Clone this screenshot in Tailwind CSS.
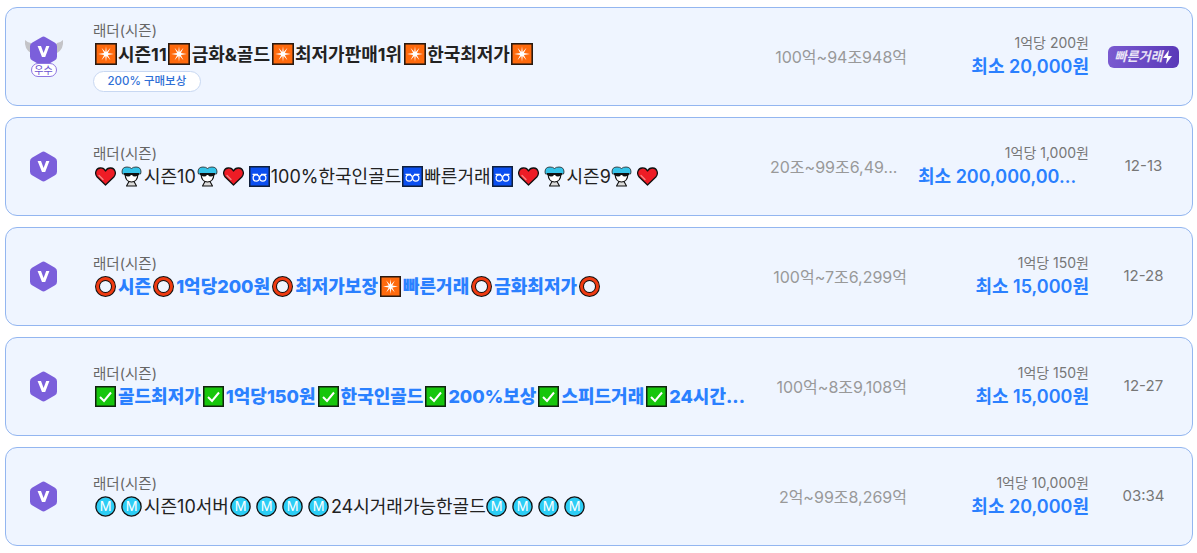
<!DOCTYPE html>
<html lang="ko">
<head>
  <meta charset="UTF-8">
  <title>래더 시즌 골드 판매 목록</title>
  <script src="https://cdn.jsdelivr.net/npm/@tailwindcss/browser@4"></script>
</head>
<body class="bg-white font-['Inter','Noto_Sans_CJK_KR',sans-serif]">
  <svg class="hidden" width="0" height="0">
    <defs>
      <symbol id="hex" viewBox="0 0 27 31"><path d="M11.5 1.2 Q13.5 0 15.5 1.2 L25 6.7 Q27 7.9 27 10.2 L27 20.8 Q27 23.1 25 24.3 L15.5 29.8 Q13.5 31 11.5 29.8 L2 24.3 Q0 23.1 0 20.8 L0 10.2 Q0 7.9 2 6.7 Z" fill="#7b5fdb"/><path d="M7.6 10 L11 10 L13.6 17 L16.2 10 L19.4 10 L15.2 21 L12 21 Z" fill="#fff"/></symbol>
      <symbol id="burst" viewBox="0 0 21 21"><rect x=".75" y=".75" width="19.5" height="19.5" fill="#ff6a0d" stroke="#2a1a10" stroke-width="1.5"/><path d="M10.5 3 L11.2 8.6 L14.8 4.6 L12.3 9.5 L18 10.5 L12.3 11.5 L14.8 16.4 L11.2 12.4 L10.5 18 L9.8 12.4 L6.2 16.4 L8.7 11.5 L3 10.5 L8.7 9.5 L6.2 4.6 L9.8 8.6 Z" fill="#fff"/></symbol>
      <symbol id="heart" viewBox="0 0 21 21"><path d="M10.5 19 L2.2 11 C-.8 7.6 .8 2.4 5.2 2 C7.6 1.8 9.5 3 10.5 5 C11.5 3 13.4 1.8 15.8 2 C20.2 2.4 21.8 7.6 18.8 11 Z" fill="#ee1c25" stroke="#111" stroke-width="1.3" stroke-linejoin="round"/><path d="M4 9.5 L8 13.5" fill="none" stroke="#f58a8a" stroke-width="1.3" stroke-linecap="round"/></symbol>
      <symbol id="cool" viewBox="0 0 21 21"><path d="M5.5 20 L8 15.5 L13 15.5 L15.5 20 Z" fill="#ddd" stroke="#111" stroke-width="1.1" stroke-linejoin="round"/><path d="M4 8 Q4.5 16 10.5 16 Q16.5 16 17 8 Z" fill="#fff" stroke="#111" stroke-width="1.1"/><path d="M1 6 Q1 1 6 1 Q9 1 10.5 2.5 Q12 1 15 1 Q20 1 20 6 L19.5 8 L1.5 8 Z" fill="#35c3e8" stroke="#222" stroke-width=".8"/><path d="M3 7 H18 V8.5 Q17 10.5 14 10.5 Q12 10.5 11 9 H10 Q9 10.5 7 10.5 Q4 10.5 3 8.5 Z" fill="#111"/></symbol>
      <symbol id="loop" viewBox="0 0 21 21"><rect x=".75" y=".75" width="19.5" height="19.5" fill="#0b4ff0" stroke="#10203c" stroke-width="1.5"/><circle cx="7.2" cy="12" r="3.1" fill="none" stroke="#fff" stroke-width="1.2"/><circle cx="13.8" cy="12" r="3.1" fill="none" stroke="#fff" stroke-width="1.2"/><path d="M3.5 8.3 H9 M12 8.3 H17.5" fill="none" stroke="#fff" stroke-width="1.2"/></symbol>
      <symbol id="ring" viewBox="0 0 21 21"><circle cx="10.5" cy="10.5" r="8" fill="none" stroke="#111" stroke-width="5"/><circle cx="10.5" cy="10.5" r="8" fill="none" stroke="#ef3b12" stroke-width="3"/></symbol>
      <symbol id="check" viewBox="0 0 21 21"><rect x=".75" y=".75" width="19.5" height="19.5" fill="#16c60c" stroke="#10240f" stroke-width="1.5"/><path d="M5 11 L9 15 L16 6.5" fill="none" stroke="#fff" stroke-width="2"/></symbol>
      <symbol id="metro" viewBox="0 0 21 21"><circle cx="10.5" cy="10.5" r="9.6" fill="#2ccdf5" stroke="#111" stroke-width="1.3"/><text x="10.5" y="15" text-anchor="middle" font-family="Inter" font-size="13" fill="#fff">M</text></symbol>
    </defs>
  </svg>

  <div class="flex flex-col gap-[11px] pt-[7px] pl-[5px] pr-[4px]">

    <div class="flex items-center h-[99px] rounded-xl border border-[#93b6f0] bg-[#eff5ff]">
      <div class="w-[75px] mr-[12px] shrink-0 flex justify-center">
        <div class="relative w-[40px] h-[42px] flex justify-center">
          <svg class="absolute left-0 top-[3px]" width="40" height="14" viewBox="0 0 40 14"><path d="M7 14 Q0 10 1 1 Q4 4 7 4 L10 9 Z M33 14 Q40 10 39 1 Q36 4 33 4 L30 9 Z" fill="#c4c4c8"/></svg>
          <svg class="relative" width="27" height="31"><use href="#hex"/></svg>
          <span class="absolute left-[7px] top-[27px] w-[26px] h-[14px] rounded-full border border-[#8f76e2] bg-white text-[10px] leading-[12px] text-center text-[#6a4fd0]">우수</span>
        </div>
      </div>
      <div class="w-[652px] shrink-0">
        <div class="text-[14.5px] leading-[20px] text-[#666]">래더(시즌)</div>
        <div class="flex items-center h-[26px] text-[18px] font-bold text-[#222] whitespace-nowrap">
          <svg class="w-[22px] h-[22px] ml-[2px] mr-[1px]"><use href="#burst"/></svg>시즌11<svg class="w-[22px] h-[22px] mx-[1.5px]"><use href="#burst"/></svg>금화&amp;골드<svg class="w-[22px] h-[22px] mx-[1.5px]"><use href="#burst"/></svg>최저가판매1위<svg class="w-[22px] h-[22px] mx-[1.5px]"><use href="#burst"/></svg>한국최저가<svg class="w-[22px] h-[22px] mx-[1.5px]"><use href="#burst"/></svg>
        </div>
        <span class="mt-[2px] inline-block h-[21px] rounded-full border border-[#c8d8f2] bg-white px-[13.5px] text-[11.5px] leading-[19px] font-medium text-[#2f6fd6]">200% 구매보상</span>
      </div>
      <div class="w-[162px] shrink-0 text-right text-[16px] text-[#999]">100억~94조948억</div>
      <div class="w-[182px] shrink-0 text-right">
        <div class="text-[14px] leading-[20px] text-[#777]">1억당 200원</div>
        <div class="text-[18px] leading-[28px] font-semibold text-[#2a80ff]">최소 20,000원</div>
      </div>
      <div class="flex-1 flex justify-center pl-[19px] pr-[13px]">
        <span class="flex items-center justify-center gap-[1px] w-[71px] h-[22px] rounded-md bg-gradient-to-r from-[#7a5ad0] to-[#5a38b8] text-[13px] font-bold italic text-white/85 whitespace-nowrap">빠른거래<svg width="9" height="14" viewBox="0 0 9 14"><path d="M6 0 L0 8 H4 L3 14 L9 6 H5 Z" fill="#fff"/></svg></span>
      </div>
    </div>

    <div class="flex items-center h-[99px] rounded-xl border border-[#93b6f0] bg-[#eff5ff]">
      <div class="w-[75px] mr-[12px] shrink-0 flex justify-center"><svg width="27" height="31"><use href="#hex"/></svg></div>
      <div class="w-[652px] shrink-0">
        <div class="text-[14.5px] leading-[20px] text-[#666]">래더(시즌)</div>
        <div class="flex items-center h-[26px] text-[18px] text-[#222] whitespace-nowrap">
          <svg class="w-[21px] h-[21px] ml-[2px] mr-[3px]"><use href="#heart"/></svg><svg class="w-[21px] h-[21px] ml-[2px] mr-[2px]"><use href="#cool"/></svg>시즌10<svg class="w-[21px] h-[21px] ml-[1px] mr-[3px]"><use href="#cool"/></svg><svg class="w-[21px] h-[21px] ml-[2px] mr-[3px]"><use href="#heart"/></svg><svg class="w-[21px] h-[21px] ml-[2px] mr-[1px]"><use href="#loop"/></svg>100%한국인골드<svg class="w-[21px] h-[21px] mx-[1px]"><use href="#loop"/></svg>빠른거래<svg class="w-[21px] h-[21px] ml-[1px] mr-[3px]"><use href="#loop"/></svg><svg class="w-[21px] h-[21px] ml-[2px] mr-[3px]"><use href="#heart"/></svg><svg class="w-[21px] h-[21px] ml-[2px] mr-[2px]"><use href="#cool"/></svg>시즌9<svg class="w-[21px] h-[21px] ml-[0px] mr-[3px]"><use href="#cool"/></svg><svg class="w-[21px] h-[21px] ml-[2px]"><use href="#heart"/></svg>
        </div>
      </div>
      <div class="w-[162px] shrink-0 pl-[25px] text-left text-[16px] text-[#999] whitespace-nowrap">20조~99조6,49...</div>
      <div class="w-[182px] shrink-0 text-right">
        <div class="text-[14px] leading-[20px] text-[#777]">1억당 1,000원</div>
        <div class="pl-[11px] text-left text-[18px] leading-[28px] font-semibold text-[#2a80ff] whitespace-nowrap">최소 200,000,00...</div>
      </div>
      <div class="flex-1 text-center pl-[6px] text-[15px] text-[#777]">12-13</div>
    </div>

    <div class="flex items-center h-[99px] rounded-xl border border-[#93b6f0] bg-[#eff5ff]">
      <div class="w-[75px] mr-[12px] shrink-0 flex justify-center"><svg width="27" height="31"><use href="#hex"/></svg></div>
      <div class="w-[652px] shrink-0">
        <div class="text-[14.5px] leading-[20px] text-[#666]">래더(시즌)</div>
        <div class="flex items-center h-[26px] text-[18px] font-extrabold text-[#2a80ff] whitespace-nowrap">
          <svg class="w-[21px] h-[21px] ml-[2px] mr-[2px]"><use href="#ring"/></svg>시즌<svg class="w-[21px] h-[21px] mx-[2px]"><use href="#ring"/></svg>1억당200원<svg class="w-[21px] h-[21px] mx-[2px]"><use href="#ring"/></svg>최저가보장<svg class="w-[21px] h-[21px] mx-[2px]"><use href="#burst"/></svg>빠른거래<svg class="w-[21px] h-[21px] mx-[2px]"><use href="#ring"/></svg>금화최저가<svg class="w-[21px] h-[21px] mx-[2px]"><use href="#ring"/></svg>
        </div>
      </div>
      <div class="w-[162px] shrink-0 text-right text-[16px] text-[#999]">100억~7조6,299억</div>
      <div class="w-[182px] shrink-0 text-right">
        <div class="text-[14px] leading-[20px] text-[#777]">1억당 150원</div>
        <div class="text-[18px] leading-[28px] font-semibold text-[#2a80ff]">최소 15,000원</div>
      </div>
      <div class="flex-1 text-center pl-[6px] text-[15px] text-[#777]">12-28</div>
    </div>

    <div class="flex items-center h-[99px] rounded-xl border border-[#93b6f0] bg-[#eff5ff]">
      <div class="w-[75px] mr-[12px] shrink-0 flex justify-center"><svg width="27" height="31"><use href="#hex"/></svg></div>
      <div class="w-[652px] shrink-0">
        <div class="text-[14.5px] leading-[20px] text-[#666]">래더(시즌)</div>
        <div class="flex items-center h-[26px] text-[18px] font-extrabold text-[#2a80ff] whitespace-nowrap">
          <svg class="w-[21px] h-[21px] ml-[2px] mr-[2px]"><use href="#check"/></svg>골드최저가<svg class="w-[21px] h-[21px] mx-[2px]"><use href="#check"/></svg>1억당150원<svg class="w-[21px] h-[21px] mx-[2px]"><use href="#check"/></svg>한국인골드<svg class="w-[21px] h-[21px] mx-[2px]"><use href="#check"/></svg>200%보상<svg class="w-[21px] h-[21px] mx-[2px]"><use href="#check"/></svg>스피드거래<svg class="w-[21px] h-[21px] mx-[2px]"><use href="#check"/></svg>24시간...
        </div>
      </div>
      <div class="w-[162px] shrink-0 text-right text-[16px] text-[#999]">100억~8조9,108억</div>
      <div class="w-[182px] shrink-0 text-right">
        <div class="text-[14px] leading-[20px] text-[#777]">1억당 150원</div>
        <div class="text-[18px] leading-[28px] font-semibold text-[#2a80ff]">최소 15,000원</div>
      </div>
      <div class="flex-1 text-center pl-[6px] text-[15px] text-[#777]">12-27</div>
    </div>

    <div class="flex items-center h-[99px] rounded-xl border border-[#93b6f0] bg-[#eff5ff]">
      <div class="w-[75px] mr-[12px] shrink-0 flex justify-center"><svg width="27" height="31"><use href="#hex"/></svg></div>
      <div class="w-[652px] shrink-0">
        <div class="text-[14.5px] leading-[20px] text-[#666]">래더(시즌)</div>
        <div class="flex items-center h-[26px] text-[18px] text-[#222] whitespace-nowrap">
          <svg class="w-[21px] h-[21px] ml-[2px] mr-[3px]"><use href="#metro"/></svg><svg class="w-[21px] h-[21px] ml-[2px] mr-[2px]"><use href="#metro"/></svg>시즌10서버<svg class="w-[21px] h-[21px] ml-[1px] mr-[3px]"><use href="#metro"/></svg><svg class="w-[21px] h-[21px] ml-[2px] mr-[3px]"><use href="#metro"/></svg><svg class="w-[21px] h-[21px] ml-[2px] mr-[3px]"><use href="#metro"/></svg><svg class="w-[21px] h-[21px] ml-[2px] mr-[2px]"><use href="#metro"/></svg>24시거래가능한골드<svg class="w-[21px] h-[21px] ml-[0px] mr-[3px]"><use href="#metro"/></svg><svg class="w-[21px] h-[21px] ml-[2px] mr-[3px]"><use href="#metro"/></svg><svg class="w-[21px] h-[21px] ml-[2px] mr-[3px]"><use href="#metro"/></svg><svg class="w-[21px] h-[21px] ml-[2px]"><use href="#metro"/></svg>
        </div>
      </div>
      <div class="w-[162px] shrink-0 text-right text-[16px] text-[#999]">2억~99조8,269억</div>
      <div class="w-[182px] shrink-0 text-right">
        <div class="text-[14px] leading-[20px] text-[#777]">1억당 10,000원</div>
        <div class="text-[18px] leading-[28px] font-semibold text-[#2a80ff]">최소 20,000원</div>
      </div>
      <div class="flex-1 text-center pl-[6px] text-[15px] text-[#777]">03:34</div>
    </div>

  </div>
</body>
</html>
